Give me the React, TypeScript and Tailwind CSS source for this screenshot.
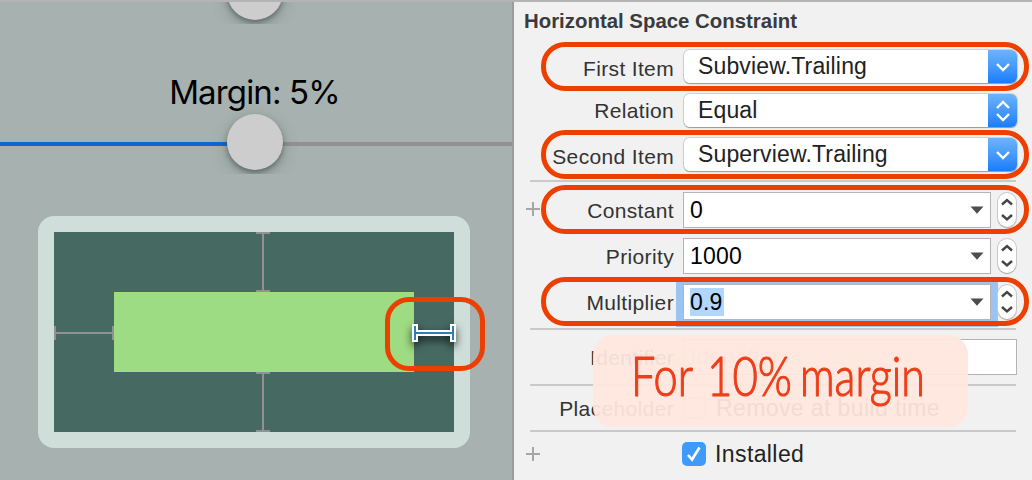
import type { ReactNode } from "react";

function Ring() {
  return (
    <div className="pointer-events-none absolute top-0 left-[27px] z-20 h-[49px] w-[488px] rounded-[24px] border-5 border-[#ec3f00]" />
  );
}

type RowProps = {
  label?: string;
  height: string;
  labelPad?: string;
  ring?: boolean;
  plus?: boolean;
  children: ReactNode;
};

function Row({ label, height, labelPad = "pt-0", ring, plus, children }: RowProps) {
  return (
    <div className={`relative flex w-[518px] shrink-0 items-center ${height}`}>
      <div className="flex w-7 shrink-0 justify-end pr-[2px]">
        {plus && (
          <svg width="14" height="14" viewBox="0 0 14 14" className="-mt-px block">
            <path d="M7 0V14M0 7H14" stroke="#a6a6a6" strokeWidth="2" />
          </svg>
        )}
      </div>
      <div
        className={`w-[132px] shrink-0 text-right text-[21px] leading-6 tracking-[0.35px] whitespace-nowrap text-[#333] ${labelPad}`}
      >
        {label}
      </div>
      <div className="ml-[9px] flex items-center">{children}</div>
      {ring && <Ring />}
    </div>
  );
}

function Popup({ value, double }: { value: string; double?: boolean }) {
  return (
    <div className="ml-px flex h-[33px] w-[333px] overflow-hidden rounded-[6px] shadow-[0_1px_1px_#9a9a9a,0_0_0_1px_#d2d2d2]">
      <div className="flex-1 bg-white pl-[14px] text-[23px] leading-[33px] tracking-[0.15px] text-[#222]">{value}</div>
      <div className="flex w-[29px] items-center justify-center bg-linear-to-b from-[#6cb3fa] to-[#157efb]">
        {double ? (
          <svg width="16" height="22" viewBox="0 0 16 22" fill="none" stroke="white" strokeWidth="2.4">
            <path d="M2 8L8 2L14 8M2 14L8 20L14 14" />
          </svg>
        ) : (
          <svg width="16" height="10" viewBox="0 0 16 10" fill="none" stroke="white" strokeWidth="2.4">
            <path d="M2 2L8 8L14 2" />
          </svg>
        )}
      </div>
    </div>
  );
}

function NumberField({ value, focused }: { value: string; focused?: boolean }) {
  return (
    <>
      <div
        className={`flex h-9 w-[308px] items-center justify-between border border-[#b4b4b4] bg-white pr-[6px] pl-[6px] ${
          focused ? "shadow-[0_0_0_7px_#9bc4f3]" : ""
        }`}
      >
        <span
          className={`text-[23px] leading-7 tracking-[0.2px] text-black ${focused ? "bg-[#b2d7fe] pr-px" : ""}`}
        >
          {value}
        </span>
        <svg width="14" height="8" viewBox="0 0 14 8">
          <path d="M0.5 0.5H13.5L7 7.8Z" fill="#4d4d4d" />
        </svg>
      </div>
      <div className="relative z-10 ml-[7px] flex h-[34px] w-[18px] items-center justify-center rounded-[9px] bg-white shadow-[0_1px_1px_#aaa,0_0_0_1px_#cdcdcd]">
        <svg width="12" height="24" viewBox="0 0 12 24" fill="none" stroke="#444" strokeWidth="2.4">
          <path d="M1 6.5L6 2L11 6.5M1 17L6 21.5L11 17" />
        </svg>
      </div>
    </>
  );
}

function Divider() {
  return <div className="ml-4 h-[2px] w-[486px] shrink-0 bg-[#c9c9c9]" />;
}

function Inspector() {
  return (
    <section className="relative flex w-[518px] flex-col bg-[#f1f1f1]">
      <h2 className="h-10 shrink-0 pl-[10px] text-[20.4px] leading-[38px] font-bold whitespace-nowrap text-[#393b3e]">
        Horizontal Space Constraint
      </h2>
      <Row label="First Item" height="h-[49px]" labelPad="pt-[4px]" ring>
        <Popup value="Subview.Trailing" />
      </Row>
      <Row label="Relation" height="h-[39px]" labelPad="pt-px">
        <Popup value="Equal" double />
      </Row>
      <Row label="Second Item" height="h-[49px]" labelPad="pt-[4px]" ring>
        <Popup value="Superview.Trailing" />
      </Row>
      <div className="h-px shrink-0" />
      <Divider />
      <div className="h-[3px] shrink-0" />
      <Row label="Constant" height="h-[49px]" labelPad="pt-[2px]" ring plus>
        <NumberField value="0" />
      </Row>
      <Row label="Priority" height="h-[43px]" labelPad="pt-[2px]">
        <NumberField value="1000" />
      </Row>
      <Row label="Multiplier" height="h-[49px]" labelPad="pt-[2px]" ring>
        <NumberField value="0.9" focused />
      </Row>
      <div className="h-[2px] shrink-0" />
      <Divider />
      <Row label="Identifier" height="h-[54px]" labelPad="pt-[2px]">
        <div className="h-9 w-[334px] border border-[#b4b4b4] bg-white pl-[6px] text-[22.5px] leading-[34px] tracking-[0.4px] text-[#c8c8c8]">
          Identifier
        </div>
      </Row>
      <Divider />
      <Row label="Placeholder" height="h-11" labelPad="pt-[2px]">
        <div className="ml-[1px] size-[22px] rounded-[4px] border border-[#bbb] bg-white" />
        <span className="ml-[10px] text-[23px] leading-7 tracking-[0.4px] text-[#222]">Remove at build time</span>
      </Row>
      <Divider />
      <Row height="h-11" plus>
        <div className="-ml-px flex size-6 items-center justify-center rounded-[5px] bg-[#3e9bfb]">
          <svg width="16" height="18" viewBox="0 0 16 18" fill="none" stroke="white" strokeWidth="2.6">
            <path d="M2 10L6 14.5L13.5 2.5" />
          </svg>
        </div>
        <span className="ml-[9px] text-[23px] leading-7 tracking-[0.4px] text-[#222]">Installed</span>
      </Row>
      <div className="absolute top-[333px] left-[79px] z-30 h-[92px] w-[375px] rounded-[20px] bg-[#ffe7de]/94">
        <svg
          width="375"
          height="92"
          viewBox="0 0 375 92"
          className="block font-['Lato',sans-serif] font-light"
          fill="#ee3e18"
          stroke="#ee3e18"
          strokeWidth="1.2"
          strokeLinejoin="round"
          fontSize="56"
        >
          <text x="38" y="61" textLength="62" lengthAdjust="spacingAndGlyphs">For</text>
          <text x="114" y="61" textLength="85" lengthAdjust="spacingAndGlyphs">10%</text>
          <text x="207" y="61" textLength="125" lengthAdjust="spacingAndGlyphs">margin</text>
        </svg>
      </div>
    </section>
  );
}

function Thumb() {
  return (
    <div className="flex h-[90px] w-[100px] items-end justify-center overflow-hidden">
      <div className="mb-1 size-14 shrink-0 rounded-full bg-[#cdcdcd] shadow-[0_5px_16px_rgba(60,90,75,0.3),0_3px_5px_rgba(50,60,60,0.5)]" />
    </div>
  );
}

function VerticalStrut() {
  return (
    <div className="flex h-[60px] w-[14px] flex-col items-center">
      <div className="h-[2px] w-full bg-[#929192]" />
      <div className="w-[2px] flex-1 bg-[#929192]" />
      <div className="h-[2px] w-full bg-[#929192]" />
    </div>
  );
}

function Preview() {
  return (
    <div className="relative mt-[42px] ml-[38px] h-[232px] w-[432px] rounded-[16px] bg-[#d0deda] p-4">
      <div className="grid h-[200px] w-[400px] grid-cols-[60px_300px_40px] grid-rows-[60px_80px_60px] bg-[#466a61]">
        <div className="col-start-2 row-start-1 pl-[142px]">
          <VerticalStrut />
        </div>
        <div className="col-start-1 row-start-2 flex h-[14px] translate-y-px items-center self-center">
          <div className="h-[14px] w-[2px] bg-[#929192]" />
          <div className="h-[2px] flex-1 bg-[#929192]" />
          <div className="h-[14px] w-[2px] bg-[#929192]" />
        </div>
        <div className="col-start-2 row-start-2 bg-[#9ddc82]" />
        <div className="col-start-2 row-start-3 pl-[142px]">
          <VerticalStrut />
        </div>
      </div>
      <svg
        width="44"
        height="18"
        viewBox="0 0 44 18"
        className="absolute top-[108px] left-[374px] overflow-visible drop-shadow-[0_4px_4px_rgba(0,0,0,0.75)]"
      >
        <path d="M0 0H6V6H38V0H44V18H38V12H6V18H0Z" fill="white" />
        <path d="M2 2H4V8H40V2H42V16H40V10H4V16H2Z" fill="#2e7dbb" />
      </svg>
      <div className="absolute top-[81px] left-[347px] h-[74px] w-[100px] rounded-[24px] border-5 border-[#ec3f00]" />
    </div>
  );
}

function Canvas() {
  return (
    <section className="w-[514px] shrink-0 overflow-hidden border-r-2 border-[#9d9c9c] bg-[#a7b1af]">
      <div className="flex h-[22px] items-end pl-[205px]">
        <Thumb />
      </div>
      <p className="mt-[46px] h-[44px] pr-[3px] text-center font-['Inter',sans-serif] text-[33px] leading-[45px] tracking-[-0.85px] text-black">
        Margin: 5%
      </p>
      <div className="-mt-[30px] flex h-[90px] items-center">
        <div className="mt-[30px] h-1 w-[205px] bg-[#1265ce]" />
        <div className="relative h-[90px] w-[307px]">
          <div className="absolute top-[58px] left-0 h-1 w-[22px] bg-[#1265ce]" />
          <div className="absolute top-[58px] left-[50px] h-1 w-[257px] bg-[#929093]" />
          <div className="relative">
            <Thumb />
          </div>
        </div>
      </div>
      <Preview />
    </section>
  );
}

export default function App() {
  return (
    <main className="flex h-[480px] w-[1032px] overflow-hidden border-t-2 border-[#b4b4b4] font-['Liberation_Sans',Arial,sans-serif]">
      <Canvas />
      <Inspector />
    </main>
  );
}
